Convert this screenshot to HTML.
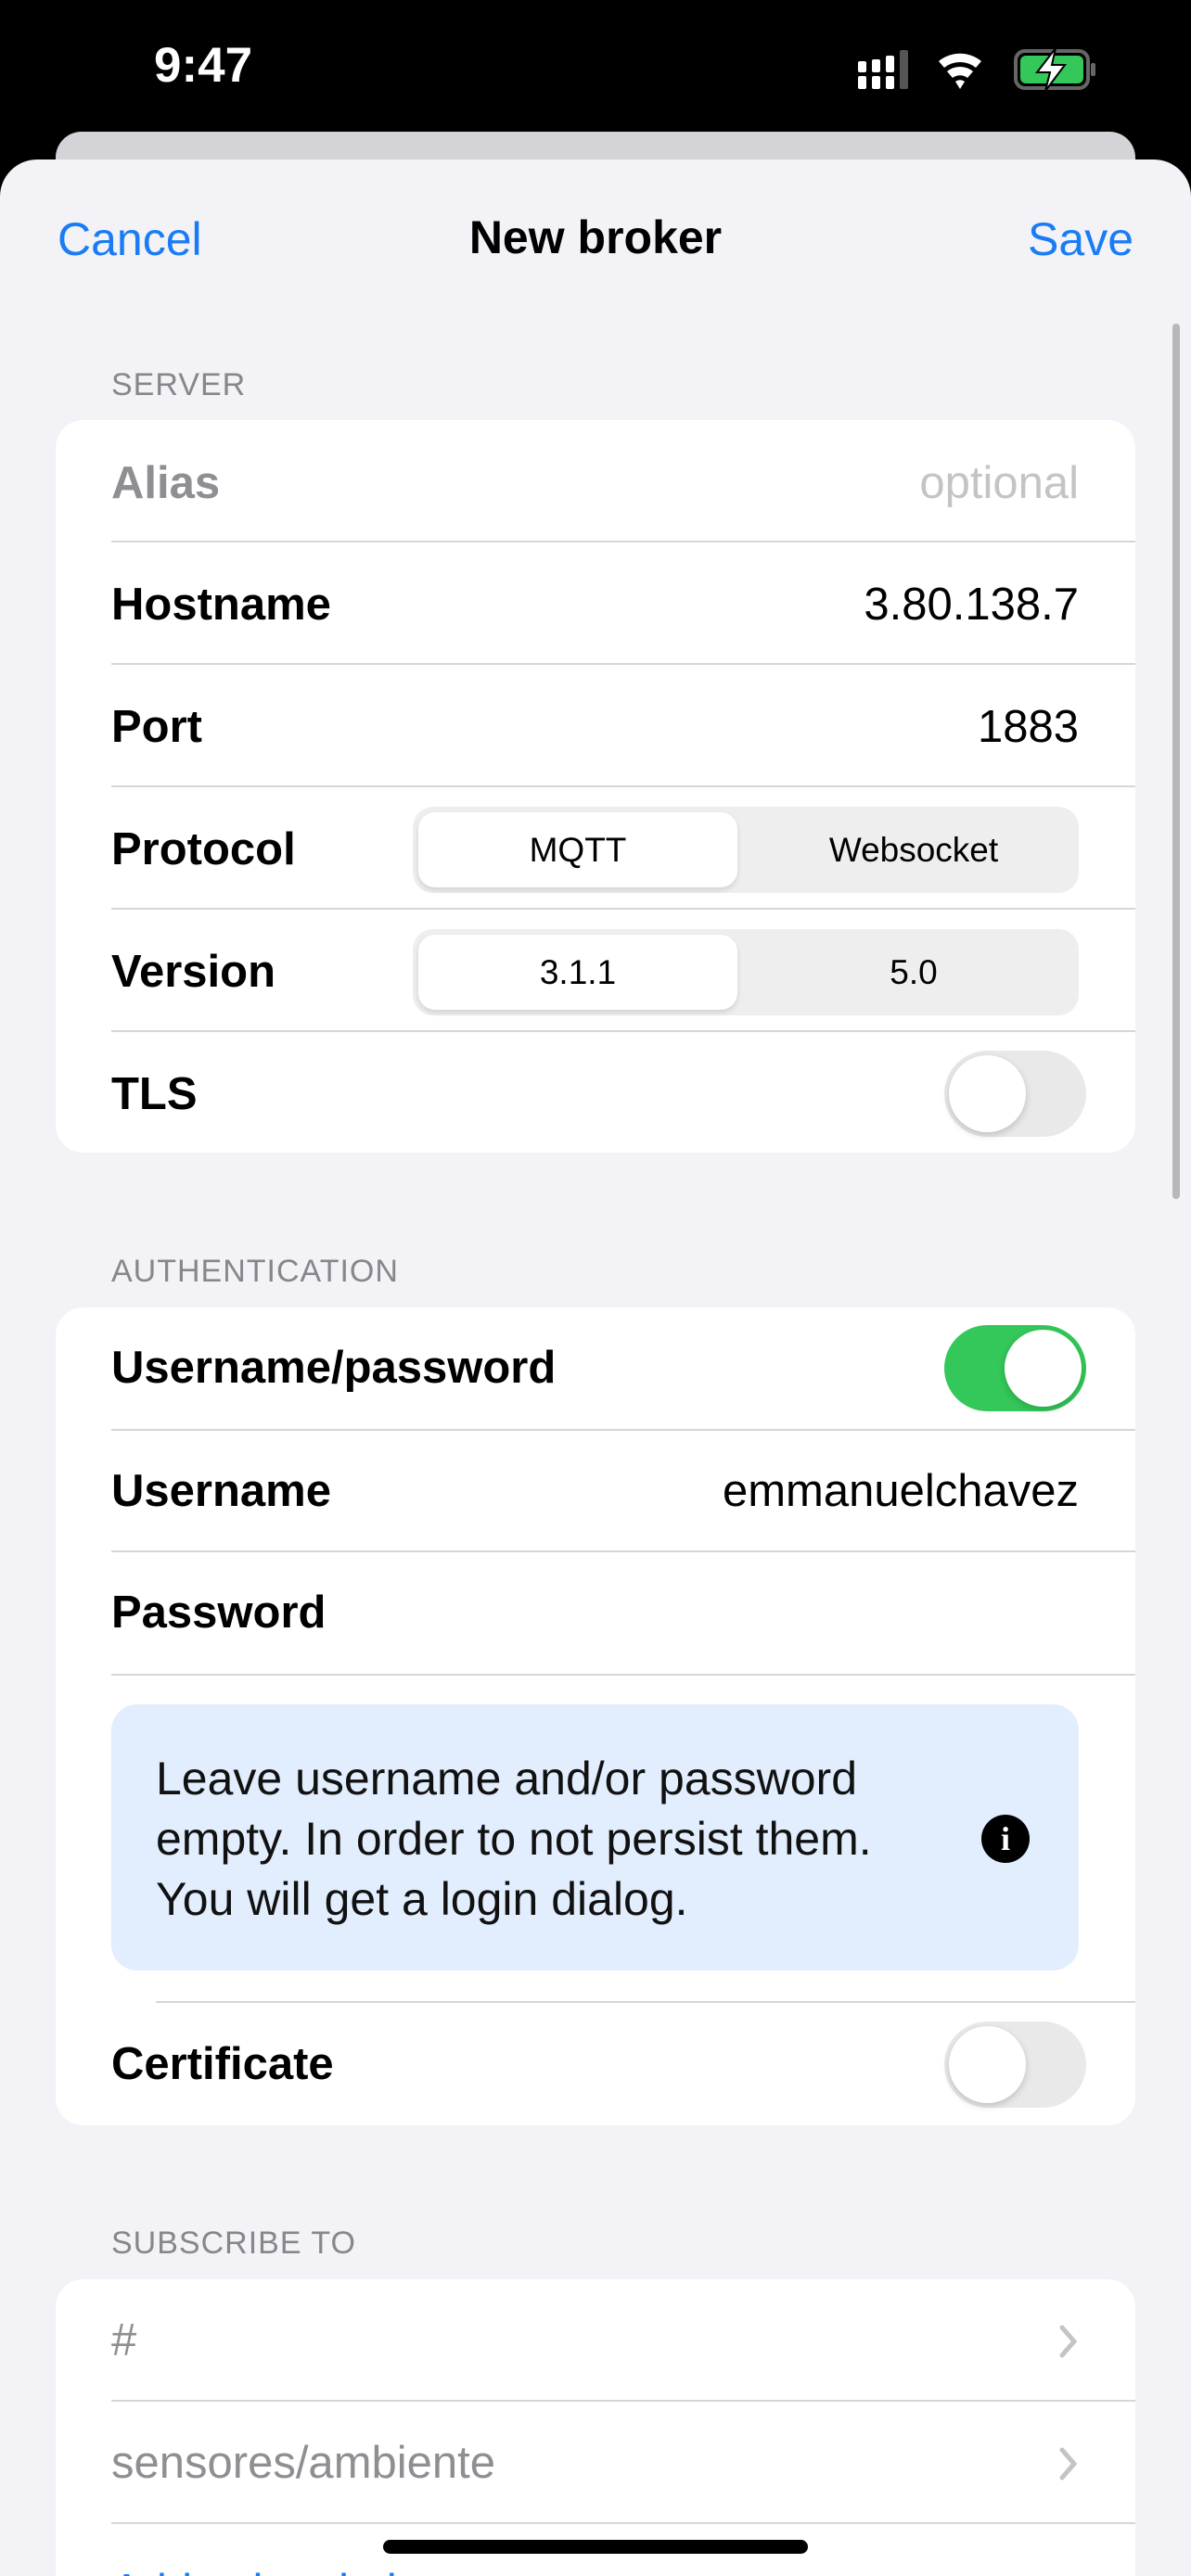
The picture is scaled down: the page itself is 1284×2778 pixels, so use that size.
<!DOCTYPE html>
<html style="width:1284px;height:2778px;overflow:hidden"><head><meta charset="utf-8"><style>
*{margin:0;padding:0;box-sizing:border-box}
html,body{width:1284px;height:2778px;overflow:hidden}
body{background:#000;position:relative;font-family:"Liberation Sans",sans-serif;}
.abs{position:absolute}
.sheet{position:absolute;left:0;top:172px;width:1284px;height:2606px;background:#f2f2f7;border-radius:40px 40px 0 0}
.card{position:absolute;left:60px;width:1164px;background:#fff;border-radius:30px;overflow:hidden}
.hdr{position:absolute;left:120px;font-size:34px;color:#86868b;letter-spacing:1px}
.lab{position:absolute;left:60px;font-size:49px;font-weight:bold;color:#000;transform:translateY(-50%)}
.val{position:absolute;right:61px;font-size:49px;color:#000;transform:translateY(-50%)}
.sep{position:absolute;left:60px;right:0;height:2px;background:#d6d6d9}
.seg{position:absolute;left:385px;width:718px;height:93px;background:#eeeeef;border-radius:22px}
.seg .on{position:absolute;left:6px;top:6px;width:344px;height:81px;background:#fff;border-radius:18px;box-shadow:0 3px 6px rgba(0,0,0,.12)}
.seg span{position:absolute;top:50%;transform:translate(-50%,-50%);font-size:37px;color:#000}
.tog{position:absolute;width:153px;height:93px;border-radius:47px;background:#e9e9ea}
.tog i{position:absolute;top:5px;width:83px;height:83px;border-radius:50%;background:#fff;box-shadow:0 3px 8px rgba(0,0,0,.18)}
</style></head><body>
<div class="abs" style="left:166px;top:40px;font-size:53px;font-weight:bold;color:#fff">9:47</div>
<svg class="abs" style="left:922px;top:52px" width="270" height="48" viewBox="0 0 270 48">
<rect x="3" y="30" width="9" height="14" rx="2" fill="#fff"/><rect x="3" y="14" width="9" height="12" rx="2" fill="#fff"/>
<rect x="18" y="30" width="9" height="14" rx="2" fill="#fff"/><rect x="18" y="12" width="9" height="14" rx="2" fill="#fff"/>
<rect x="33" y="30" width="9" height="14" rx="2" fill="#fff"/><rect x="33" y="8" width="9" height="18" rx="2" fill="#fff"/>
<rect x="48" y="2" width="9" height="42" rx="2" fill="#555"/>
<path d="M90 14 A36 36 0 0 1 136 14 L130 21 A27 27 0 0 0 96 21Z M99 25 A22 22 0 0 1 127 25 L121 32 A13 13 0 0 0 105 32Z M108 36 A8 8 0 0 1 118 36 L113 44Z" fill="#fff"/>
<rect x="173" y="3" width="78" height="40" rx="10" fill="none" stroke="#666" stroke-width="4"/>
<rect x="178" y="8" width="68" height="30" rx="6" fill="#34c759"/>
<rect x="254" y="16" width="5" height="14" rx="2" fill="#666"/>
<path d="M216 0 L196 26 L210 26 L205 46 L226 18 L212 18Z" fill="#fff" stroke="#000" stroke-width="2"/>
</svg>
<div class="abs" style="left:60px;top:142px;width:1164px;height:80px;background:#d4d4d8;border-radius:28px 28px 0 0"></div>
<div class="sheet"></div>
<div class="abs" style="left:62px;top:229px;font-size:50px;color:#1a7cf5">Cancel</div>
<div class="abs" style="left:0;width:1284px;text-align:center;top:227px;font-size:50px;font-weight:bold;color:#000">New broker</div>
<div class="abs" style="right:62px;top:229px;font-size:50px;color:#1a7cf5">Save</div>
<div class="abs" style="left:1264px;top:349px;width:8px;height:944px;border-radius:4px;background:#b8b8bc"></div>

<div class="hdr" style="top:396px">SERVER</div>
<div class="card" style="top:453px;height:790px">
<div class="lab" style="top:68px;color:#8e8e93;font-weight:bold">Alias</div><div class="val" style="top:68px;color:#c4c4c7">optional</div>
<div class="sep" style="top:130px"></div>
<div class="lab" style="top:199px">Hostname</div><div class="val" style="top:199px">3.80.138.7</div>
<div class="sep" style="top:262px"></div>
<div class="lab" style="top:331px">Port</div><div class="val" style="top:331px">1883</div>
<div class="sep" style="top:394px"></div>
<div class="lab" style="top:463px">Protocol</div>
<div class="seg" style="top:417px"><div class="on"></div><span style="left:178px">MQTT</span><span style="left:540px">Websocket</span></div>
<div class="sep" style="top:526px"></div>
<div class="lab" style="top:595px">Version</div>
<div class="seg" style="top:549px"><div class="on"></div><span style="left:178px">3.1.1</span><span style="left:540px">5.0</span></div>
<div class="sep" style="top:658px"></div>
<div class="lab" style="top:727px">TLS</div>
<div class="tog" style="left:958px;top:680px"><i style="left:5px"></i></div>
</div>

<div class="hdr" style="top:1352px">AUTHENTICATION</div>
<div class="card" style="top:1410px;height:882px">
<div class="lab" style="top:65px">Username/password</div>
<div class="tog" style="left:958px;top:19px;background:#34c759"><i style="left:65px"></i></div>
<div class="sep" style="top:131px"></div>
<div class="lab" style="top:198px">Username</div><div class="val" style="top:198px">emmanuelchavez</div>
<div class="sep" style="top:262px"></div>
<div class="lab" style="top:329px">Password</div>
<div class="sep" style="top:395px"></div>
<div class="abs" style="left:60px;top:428px;width:1043px;height:287px;background:#e2eefd;border-radius:28px">
<div class="abs" style="left:48px;top:48px;font-size:50px;line-height:65px;color:#111">Leave username and/or password<br>empty. In order to not persist them.<br>You will get a login dialog.</div>
<div class="abs" style="left:964px;top:145px;width:52px;height:52px;border-radius:50%;background:#000;transform:translate(-50%,-50%);color:#fff;font-weight:bold;font-size:36px;text-align:center;line-height:52px;font-family:'Liberation Serif',serif">i</div>
</div>
<div class="sep" style="top:748px;left:108px"></div>
<div class="lab" style="top:816px">Certificate</div>
<div class="tog" style="left:958px;top:770px"><i style="left:5px"></i></div>
</div>

<div class="hdr" style="top:2400px">SUBSCRIBE TO</div>
<div class="card" style="top:2458px;height:320px;border-radius:30px 30px 0 0">
<div class="lab" style="top:66px;color:#8e8e93;font-weight:normal">#</div>
<svg class="abs" style="left:1080px;top:48px" width="24" height="38"><path d="M5 4 L18 19 L5 34" fill="none" stroke="#c4c4c7" stroke-width="5" stroke-linecap="round"/></svg>
<div class="sep" style="top:130px"></div>
<div class="lab" style="top:198px;color:#8e8e93;font-weight:normal">sensores/ambiente</div>
<svg class="abs" style="left:1080px;top:180px" width="24" height="38"><path d="M5 4 L18 19 L5 34" fill="none" stroke="#c4c4c7" stroke-width="5" stroke-linecap="round"/></svg>
<div class="sep" style="top:262px"></div>
<div class="abs" style="left:60px;top:308px;font-size:49px;color:#1a7cf5">Add subscription</div>
</div>
<div class="abs" style="left:413px;top:2739px;width:458px;height:15px;border-radius:8px;background:#000"></div>
</body></html>
